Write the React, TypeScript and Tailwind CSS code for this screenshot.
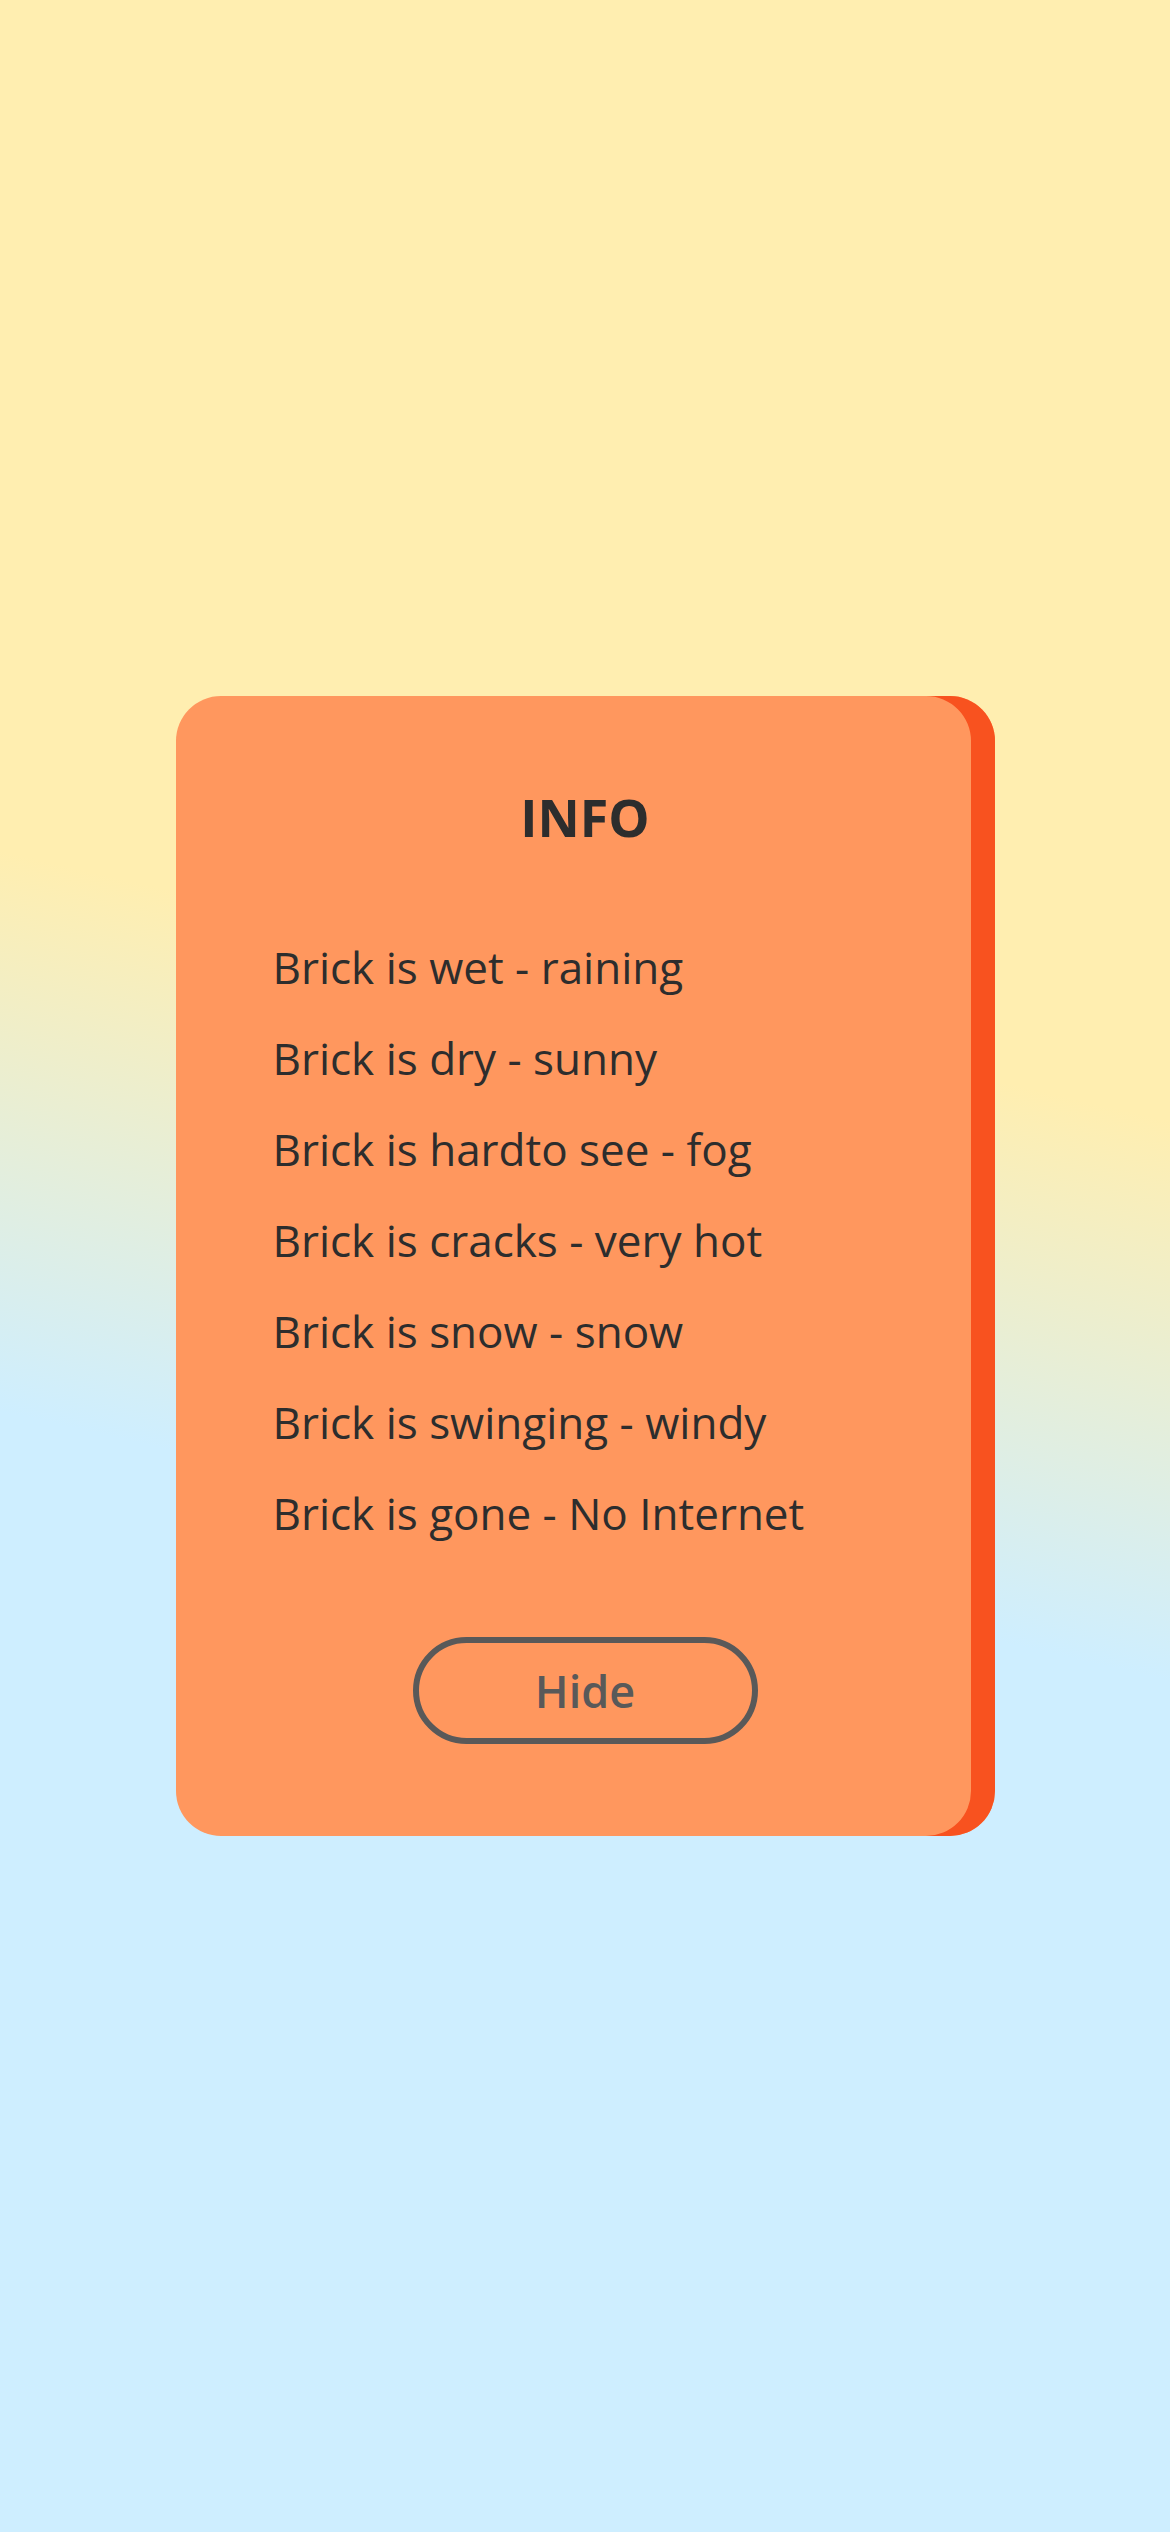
import React from "react";

const weatherStates = [
  "Brick is wet - raining",
  "Brick is dry - sunny",
  "Brick is hardto see - fog",
  "Brick is cracks - very hot",
  "Brick is snow - snow",
  "Brick is swinging - windy",
  "Brick is gone - No Internet",
];

export default function App() {
  return (
    <div
      className="min-h-screen w-full flex items-center justify-center bg-[linear-gradient(193deg,#ffeeb0_40%,#ceeeff_60%)]"
      style={{ fontFamily: "'Open Sans', 'Noto Sans', sans-serif" }}
    >
      {/* Info card */}
      <div className="w-[819px] rounded-[45px] bg-[#ff975e] shadow-[inset_-24px_0_0_0_#f8521f] pt-[95px] pb-[92px] flex flex-col">
        <h1 className="text-center text-[52px] leading-none font-bold text-[#2d2d2d]">INFO</h1>

        <ul className="mt-[79px] pl-[97px]">
          {weatherStates.map((s) => (
            <li key={s} className="text-[44px] leading-[91px] text-[#2d2d2d]">
              {s}
            </li>
          ))}
        </ul>

        <div className="mt-[78px] flex justify-center">
          <button className="w-[345px] h-[107px] rounded-full border-[6px] border-[#595959] text-[45px] font-semibold text-[#595959] flex items-center justify-center">
            Hide
          </button>
        </div>
      </div>
    </div>
  );
}
